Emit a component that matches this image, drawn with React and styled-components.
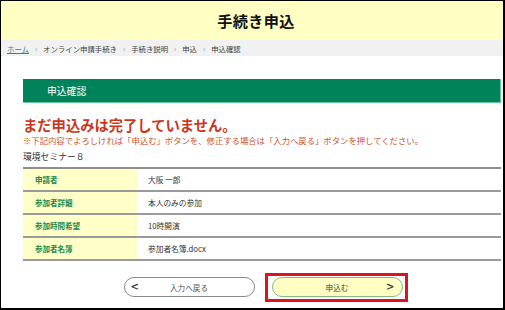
import React from 'react'
import styled, { createGlobalStyle } from 'styled-components'

const Global = createGlobalStyle`
  html, body {
    margin: 0;
    padding: 0;
    background: #fff;
  }
  body {
    font-family: 'Noto Sans CJK JP', 'Noto Sans', sans-serif;
    color: #333;
  }
`

const Frame = styled.div`
  box-sizing: border-box;
  width: 505px;
  height: 310px;
  border: 1px solid #000;
  border-right-width: 2px;
  border-bottom-width: 2px;
  overflow: hidden;
  display: flex;
  flex-direction: column;
`

const Header = styled.header`
  height: 39px;
  background: #ffffc4;
  display: flex;
  align-items: center;
  justify-content: center;
`

const Title = styled.h1`
  margin: 0;
  font-size: 15.2px;
  font-weight: 700;
  color: #111;
  letter-spacing: 0.3px;
  line-height: 1;
  padding-left: 8px;
`

const Crumbs = styled.nav`
  height: 16px;
  background: #f1f1f1;
  display: flex;
  align-items: center;
  padding-left: 6px;
  font-size: 7.4px;
  color: #444;
  gap: 6px;
`

const CrumbLink = styled.a`
  color: #2c8a86;
  text-decoration: underline;
`

const Sep = styled.span`
  color: #888;
  font-size: 7px;
`

const Main = styled.main`
  padding: 23px 2px 0 22px;
  display: flex;
  flex-direction: column;
`

const SectionBar = styled.div`
  box-sizing: border-box;
  height: 24px;
  background: #00825a;
  border-bottom: 1px solid #62c99c;
  border-right: 1px solid #62c99c;
  color: #fff;
  font-size: 9.8px;
  display: flex;
  align-items: center;
  padding-left: 24px;
`

const Warning = styled.h2`
  margin: 13px 0 0;
  font-size: 14.3px;
  font-weight: 700;
  line-height: 17px;
  color: #c8381c;
`

const Note = styled.p`
  margin: 2px 0 0;
  font-size: 8.35px;
  line-height: 11px;
  color: #c8542e;
  white-space: nowrap;
`

const EventName = styled.p`
  margin: 5px 0 0;
  font-size: 8.8px;
  line-height: 11px;
  color: #333;
`

const Table = styled.table`
  margin-top: 5px;
  border-collapse: collapse;
  width: 100%;
  border-top: 2px solid #8e8e8e;
`

const Row = styled.tr`
  height: 23px;
  border-bottom: 2px solid #9a9a9a;
`

const Label = styled.th`
  width: 115px;
  box-sizing: border-box;
  background: #ffffc8;
  color: #22894a;
  font-size: 7.5px;
  font-weight: 700;
  text-align: left;
  padding: 0 0 0 12px;
`

const Value = styled.td`
  font-size: 7.7px;
  color: #333;
  padding: 0 0 0 10px;
`

const Actions = styled.div`
  display: flex;
  justify-content: center;
  gap: 17px;
  margin-top: 16px;
  padding-left: 2px;
`

const PillButton = styled.button`
  position: relative;
  box-sizing: border-box;
  width: 131px;
  height: 20px;
  border-radius: 10px;
  border: 1px solid ${p => (p.$primary ? '#86b986' : '#8a8a8a')};
  background: ${p => (p.$primary ? '#ffffc4' : '#fff')};
  color: ${p => (p.$primary ? '#3a3a3a' : '#555')};
  font-family: inherit;
  font-size: 7.6px;
  display: flex;
  align-items: center;
  justify-content: center;
  padding: 0;
`

const Arrow = styled.span`
  position: absolute;
  top: 50%;
  transform: translateY(-52%);
  ${p => (p.$side === 'left' ? 'left: 6px;' : 'right: 7px;')}
  font-size: 10px;
  font-weight: 700;
  color: #444;
  font-family: 'DejaVu Sans', sans-serif;
`

const Highlight = styled.span`
  position: absolute;
  left: -8px;
  right: -6px;
  top: -5px;
  bottom: -6px;
  border: 3px solid #e1121b;
  pointer-events: none;
`

const rows = [
  ['申請者', '大阪 一郎'],
  ['参加者詳細', '本人のみの参加'],
  ['参加時間希望', '10時開演'],
  ['参加者名簿', '参加者名簿.docx'],
]

const crumbs = ['オンライン申請手続き', '手続き説明', '申込', '申込確認']

export default function App() {
  return (
    <Frame>
      <Global />
      <Header>
        <Title>手続き申込</Title>
      </Header>
      <Crumbs>
        <CrumbLink>ホーム</CrumbLink>
        {crumbs.map(c => (
          <React.Fragment key={c}>
            <Sep>›</Sep>
            <span>{c}</span>
          </React.Fragment>
        ))}
      </Crumbs>
      <Main>
        <SectionBar>申込確認</SectionBar>
        <Warning>まだ申込みは完了していません。</Warning>
        <Note>
          ※下記内容でよろしければ「申込む」ボタンを、修正する場合は「入力へ戻る」ボタンを押してください。
        </Note>
        <EventName>環境セミナー８</EventName>
        <Table>
          <tbody>
            {rows.map(([k, v]) => (
              <Row key={k}>
                <Label>{k}</Label>
                <Value>{v}</Value>
              </Row>
            ))}
          </tbody>
        </Table>
        <Actions>
          <PillButton>
            <Arrow $side="left">&lt;</Arrow>
            入力へ戻る
          </PillButton>
          <PillButton $primary>
            申込む
            <Arrow $side="right">&gt;</Arrow>
            <Highlight />
          </PillButton>
        </Actions>
      </Main>
    </Frame>
  )
}
